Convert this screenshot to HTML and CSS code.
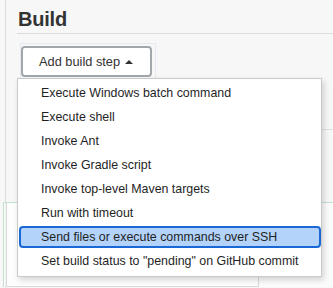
FILE: index.html
```html
<!DOCTYPE html>
<html lang="en">
<head>
    <meta charset="UTF-8">
    <meta name="viewport" content="width=device-width, initial-scale=1.0">
    <title>Build steps</title>
    <link rel="stylesheet" href="styles.css">
</head>
<body>

    <div class="page">
        <section class="build">
            <h2 class="section-title">Build</h2>

            <div class="add-step">
                <button class="btn-add" type="button">Add build step <span class="caret"></span></button>

                <!-- open dropdown, sits over the steps below -->
                <ul class="step-menu">
                    <li class="step-item">Execute Windows batch command</li>
                    <li class="step-item">Execute shell</li>
                    <li class="step-item">Invoke Ant</li>
                    <li class="step-item">Invoke Gradle script</li>
                    <li class="step-item">Invoke top-level Maven targets</li>
                    <li class="step-item">Run with timeout</li>
                    <li class="step-item is-active">Send files or execute commands over SSH</li>
                    <li class="step-item">Set build status to "pending" on GitHub commit</li>
                </ul>
            </div>

            <div class="step-list"></div>

            <div class="step-card">
                <div class="step-field"></div>
            </div>
        </section>
    </div>

</body>
</html>
```

FILE: styles.css
```css
/* --- General --- */
:root {
    --bg-page: #f7f7f7;
    --text: #333333;
    --text-menu: #1f1f1f;
    --line: #dcdcdc;
    --green-line: #c3e2ce;
    --blue-600: #1a68d6;
    --blue-200: #b3d3fb;
}

body {
    font-family: 'Liberation Sans', Arial, sans-serif;
    background-color: var(--bg-page);
    color: var(--text);
    margin: 0;
    padding: 0;
    overflow: hidden;
}

/* --- Layout --- */
.page {
    margin-left: 5px;
    border-left: 1px solid var(--line);
    padding: 7px 0 0 11px;
    min-height: 100vh;
}

.section-title {
    margin: 0;
    padding-left: 1px;
    font-size: 20px;
    line-height: 24px;
    font-weight: 700;
    letter-spacing: -0.2px;
    color: var(--text);
    padding-bottom: 2px;
    border-bottom: 1px solid var(--line);
}

/* --- Add step button --- */
.add-step {
    position: relative;
    width: max-content;
    margin: 9px 0 0 3px;
    padding: 2px 3px 2px 0;
    border: 1px solid #e3eaf1;
    border-bottom: none;
}

.btn-add {
    display: flex;
    align-items: center;
    box-sizing: border-box;
    width: 131px;
    height: 31px;
    padding: 0 0 0 16px;
    background-color: #ffffff;
    border: 2px solid #a2a7ac;
    border-radius: 4px;
    font-family: inherit;
    font-size: 12.8px;
    color: var(--text);
    cursor: pointer;
}

.caret {
    display: inline-block;
    width: 0;
    height: 0;
    margin-left: 5px;
    border-left: 4px solid transparent;
    border-right: 4px solid transparent;
    border-bottom: 4px solid var(--text);
}

/* --- Dropdown menu --- */
.step-menu {
    position: absolute;
    top: 34px;
    left: -4px;
    z-index: 10;
    box-sizing: border-box;
    width: 305px;
    margin: 0;
    padding: 3px 0 4px;
    list-style: none;
    display: flex;
    flex-direction: column;
    gap: 2px;
    background-color: #ffffff;
    border: 1px solid #cacaca;
    box-shadow: 2px 3px 6px rgba(0, 0, 0, 0.16);
}

.step-item {
    box-sizing: border-box;
    height: 22px;
    margin-left: 1px;
    padding-left: 20px;
    border: 2px solid transparent;
    border-radius: 4px;
    font-size: 12.4px;
    line-height: 18px;
    color: var(--text-menu);
    white-space: nowrap;
}
.step-item.is-active {
    background-color: var(--blue-200);
    border-color: var(--blue-600);
}

/* --- Steps behind the menu --- */
.step-list {
    margin-top: 50px;
    height: 73px;
    border-top: 1px solid #e2e2e2;
    box-sizing: border-box;
}

.step-card {
    margin-left: -14px;
    padding: 0 0 0 2px;
    border-top: 1px solid var(--green-line);
    border-left: 1px solid var(--green-line);
    background-color: rgba(252, 254, 252, 0.6);
}

.step-field {
    box-sizing: border-box;
    width: 253px;
    height: 84px;
    background-color: #fdfdfd;
    border: 1px solid #dadada;
    border-top: none;
}
```
